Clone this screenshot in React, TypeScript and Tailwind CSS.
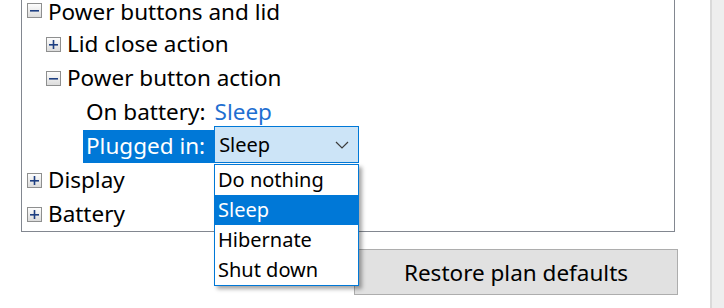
import React from 'react'

const FONT = { fontFamily: '"Noto Sans", "Open Sans", sans-serif' }

function Expander({ open }: { open: boolean }) {
    return (
        <div className="w-[15px] h-[15px] shrink-0 border border-[#8e8f8f] bg-gradient-to-b from-[#fdfdfd] to-[#dcdcdc] flex items-center justify-center">
            <svg width="9" height="9" viewBox="0 0 9 9">
                <rect x="0" y="4" width="9" height="1.6" fill="#1e3f82" />
                {!open && <rect x="3.7" y="0" width="1.6" height="9" fill="#1e3f82" />}
            </svg>
        </div>
    )
}

function Row({ children, indent }: { children: React.ReactNode; indent: string }) {
    return <div className={`h-[34px] flex items-center pt-[1px] ${indent}`}>{children}</div>
}

export default function App() {
    return (
        <div className="relative w-[724px] h-[308px] bg-white overflow-hidden text-black text-[22.5px] leading-none" style={FONT}>
            <div className="flex h-full">
                <div className="flex-1 flex flex-col">
                    {/* Settings tree, scrolled so its top is out of view */}
                    <div className="ml-[21px] w-[654px] h-[232px] border-x border-b border-[#828790] overflow-hidden">
                        <div className="h-[27px] flex items-start pt-[3px] pl-[5px]">
                            <Expander open />
                            <span className="ml-[6px] leading-[17px]">Power buttons and lid</span>
                        </div>
                        <Row indent="pl-[24px]">
                            <Expander open={false} />
                            <span className="ml-[6px]">Lid close action</span>
                        </Row>
                        <Row indent="pl-[24px]">
                            <Expander open />
                            <span className="ml-[6px]">Power button action</span>
                        </Row>
                        <Row indent="pl-[64px]">
                            <span>On battery:</span>
                            <span className="ml-[9px] text-[#1f6fd1]">Sleep</span>
                        </Row>
                        <Row indent="pl-[61px]">
                            <div className="h-full flex items-center bg-[#0078d7] text-white pl-[3px] pr-[9px]">Plugged in:</div>
                            <div className="h-[37px] w-[145px] -mt-[4px] border border-[#0078d7] bg-[#cce4f7] flex items-center justify-between pl-[4px] pr-[9px] text-[20px]">
                                <span>Sleep</span>
                                <svg width="14" height="8" viewBox="0 0 14 8" fill="none" stroke="#3c3c3c" strokeWidth="1.2">
                                    <polyline points="1,1 7,7 13,1" />
                                </svg>
                            </div>
                        </Row>
                        <Row indent="pl-[5px]">
                            <Expander open={false} />
                            <span className="ml-[6px]">Display</span>
                        </Row>
                        <Row indent="pl-[5px]">
                            <Expander open={false} />
                            <span className="ml-[6px]">Battery</span>
                        </Row>
                    </div>

                    <div className="flex justify-end pr-[32px] mt-[17px]">
                        <button className="w-[324px] h-[46px] bg-[#e1e1e1] border border-[#adadad] text-[22.5px] leading-none pt-[2px]">
                            Restore plan defaults
                        </button>
                    </div>
                </div>

                {/* Side panel */}
                <div className="w-[14px] h-full bg-[#eeeeee] border-l-2 border-[#dadada]" />
            </div>

            {/* Open dropdown list */}
            <div className="absolute left-[214px] top-[164px] w-[145px] border border-[#0078d7] bg-white text-[20px] shadow-[3px_3px_4px_rgba(0,0,0,0.35)]">
                {['Do nothing', 'Sleep', 'Hibernate', 'Shut down'].map(item => (
                    <div key={item}
                        className={`h-[30px] flex items-center pl-[3px] ${item === 'Sleep' ? 'bg-[#0078d7] text-white' : ''}`}>
                        {item}
                    </div>
                ))}
            </div>
        </div>
    )
}
